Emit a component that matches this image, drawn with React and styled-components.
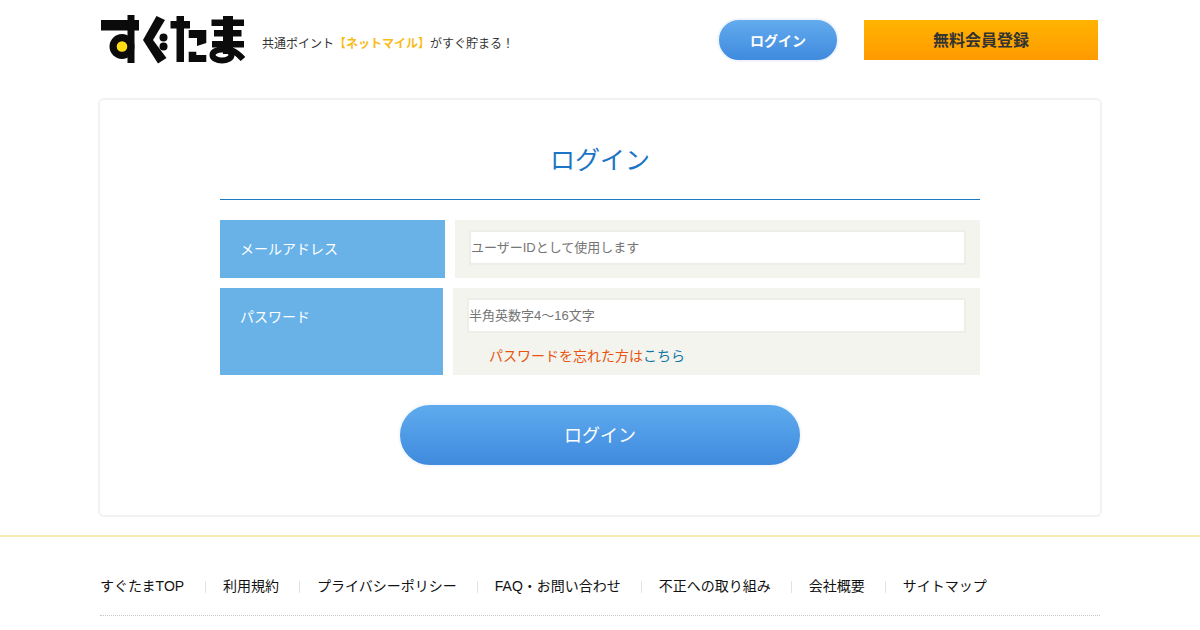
import React from "react";
import styled, { createGlobalStyle } from "styled-components";

const Global = createGlobalStyle`
  html, body { margin: 0; padding: 0; background: #fff; }
  body { font-family: "Liberation Sans", "Noto Sans CJK JP", sans-serif; color: #333; overflow: hidden; }
  * { box-sizing: border-box; }
`;

const Page = styled.div`
  width: 1200px;
  height: 630px;
  overflow: hidden;
`;
const Header = styled.header`
  width: 1000px;
  height: 98px;
  margin: 0 auto;
  display: flex;
  align-items: flex-start;
`;
const LogoLink = styled.a`
  display: block;
  width: 146px;
  height: 52px;
  margin-top: 14px;
`;
const Tagline = styled.p`
  margin: 36px 0 0 16px;
  font-size: 12px;
  line-height: 17px;
  color: #333;
  flex: 1;
`;
const Highlight = styled.strong`
  color: #f8bc1a;
  font-weight: bold;
`;
const SmallLogin = styled.a`
  width: 122px;
  height: 44px;
  margin-top: 18px;
  padding-bottom: 1px;
  border: 2px solid #f1f5fb;
  border-radius: 22px;
  background: linear-gradient(#62abed, #408ade);
  color: #fff;
  font-size: 14px;
  font-weight: bold;
  display: flex;
  align-items: center;
  justify-content: center;
`;
const Register = styled.a`
  width: 234px;
  height: 40px;
  margin: 20px 2px 0 25px;
  padding-bottom: 3px;
  background: linear-gradient(#ffb400, #ff9a00);
  color: #333;
  font-size: 16px;
  font-weight: bold;
  display: flex;
  align-items: center;
  justify-content: center;
`;
const Card = styled.main`
  width: 1004px;
  height: 419px;
  margin: 0 auto;
  padding: 0 120px;
  border: 2px solid #f2f2f2;
  border-radius: 6px;
  display: flex;
  flex-direction: column;
`;
const Title = styled.h1`
  margin: 0 0 20px;
  height: 100px;
  padding-top: 43px;
  border-bottom: 1px solid #1b7cc4;
  font-size: 25px;
  line-height: 34px;
  font-weight: normal;
  text-align: center;
  color: #1b75c4;
`;
const Row = styled.div`
  display: flex;
  gap: 10px;
  height: ${(p) => p.$height}px;
  margin-bottom: 10px;
`;
const Label = styled.div`
  width: ${(p) => p.$width}px;
  flex: none;
  padding: ${(p) => p.$top}px 0 0 20px;
  background: #68b2e8;
  color: #fff;
  font-size: 14px;
  line-height: 20px;
`;
const Field = styled.div`
  flex: 1;
  padding: ${(p) => p.$top}px 14px 0;
  background: #f4f4ef;
`;
const Input = styled.input`
  display: block;
  width: 100%;
  height: 35px;
  padding: 0;
  border: 2px solid #eeeee9;
  background: #fff;
  font: 13px "Liberation Sans", "Noto Sans CJK JP", sans-serif;
  outline: none;
  &::placeholder { color: #757575; opacity: 1; }
`;
const Forgot = styled.p`
  margin: 13px 0 0 22px;
  font-size: 14px;
  line-height: 20px;
  color: #e8540e;
`;
const ForgotLink = styled.a`
  color: #1276a8;
`;
const Submit = styled.button`
  display: block;
  width: 404px;
  height: 64px;
  margin: 18px auto 0;
  padding: 0 0 2px;
  border: 2px solid #f5f9fd;
  border-radius: 32px;
  background: linear-gradient(#5fabee, #408ade);
  color: #fff;
  font: 18px "Liberation Sans", "Noto Sans CJK JP", sans-serif;
`;
const Footer = styled.footer`
  margin-top: 18px;
  border-top: 2px solid #f7edb8;
`;
const FooterInner = styled.nav`
  width: 1000px;
  height: 79px;
  margin: 0 auto;
  padding-top: 39px;
  border-bottom: 1px dotted #c8c8c8;
  display: flex;
  align-items: flex-start;
`;
const FooterLink = styled.a`
  font-size: 14px;
  line-height: 20px;
  color: #111;
  &:first-child { margin-right: 1px; }
`;
const Sep = styled.span`
  width: 1px;
  height: 12px;
  margin: 5px 17px 0 20px;
  background: #e2e2e2;
`;

const Logo = () => (
  <svg width="146" height="52" viewBox="100 14 146 52">
    <g fill="#0b0b0b">
      <rect x="101" y="20" width="38" height="10.5" />
      <rect x="127.5" y="15" width="7" height="48" />
      <circle cx="122" cy="46.5" r="12.5" />
      <path d="M156.5 16 L165 20 L153 40 L166.5 58 L158 63.5 L143 40Z" />
      <circle cx="163.5" cy="37.5" r="4" />
      <circle cx="163.5" cy="46.5" r="4" />
      <rect x="170.5" y="21" width="19.5" height="7.5" />
      <rect x="176.5" y="16" width="7.5" height="46" />
      <path d="M188.7 30 H206.3 V43 L197 46 V38 H188.7Z" />
      <path d="M188.7 51.7 H196.3 V55 H206.3 V62 H188.7Z" />
      <rect x="211.5" y="19.5" width="32.5" height="6.5" />
      <rect x="214" y="30" width="27.5" height="6.5" />
      <rect x="223" y="16" width="10" height="38" />
      <rect x="212" y="41" width="32" height="6.5" />
    </g>
    <ellipse cx="222" cy="55" rx="9.5" ry="5.5" fill="none" stroke="#0b0b0b" strokeWidth="6" />
    <path d="M231 50 Q238 53 243 59" fill="none" stroke="#0b0b0b" strokeWidth="6" />
    <circle cx="122" cy="46.5" r="5.3" fill="#ffdc14" />
  </svg>
);

const links = ["すぐたまTOP", "利用規約", "プライバシーポリシー", "FAQ・お問い合わせ", "不正への取り組み", "会社概要", "サイトマップ"];

export default function App() {
  return (
    <Page>
      <Global />
      <Header>
        <LogoLink><Logo /></LogoLink>
        <Tagline>共通ポイント<Highlight>【ネットマイル】</Highlight>がすぐ貯まる！</Tagline>
        <SmallLogin>ログイン</SmallLogin>
        <Register>無料会員登録</Register>
      </Header>
      <Card>
        <Title>ログイン</Title>
        <Row $height={58}>
          <Label $width={225} $top={19}>メールアドレス</Label>
          <Field $top={10}><Input placeholder="ユーザーIDとして使用します" /></Field>
        </Row>
        <Row $height={87}>
          <Label $width={223} $top={19}>パスワード</Label>
          <Field $top={10}>
            <Input placeholder="半角英数字4～16文字" />
            <Forgot>パスワードを忘れた方は<ForgotLink>こちら</ForgotLink></Forgot>
          </Field>
        </Row>
        <Submit>ログイン</Submit>
      </Card>
      <Footer>
        <FooterInner>
          {links.map((l, i) => (
            <React.Fragment key={l}>
              {i > 0 && <Sep />}
              <FooterLink>{l}</FooterLink>
            </React.Fragment>
          ))}
        </FooterInner>
      </Footer>
    </Page>
  );
}
